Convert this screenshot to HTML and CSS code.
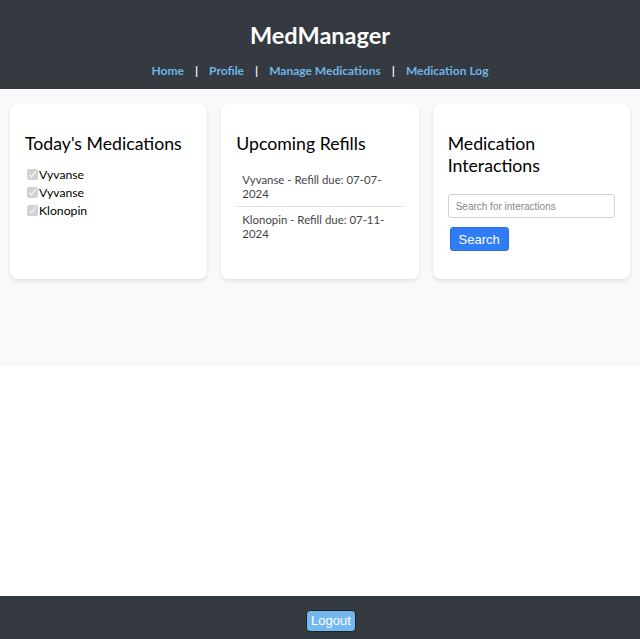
FILE: index.html
```html
<!DOCTYPE html>
<html lang="en">
<head>
<meta charset="utf-8">
<title>MedManager</title>
<link rel="stylesheet" href="styles.css">
</head>
<body>
<header class="site-header">
  <h1 class="brand">MedManager</h1>
  <nav class="nav">
    <a href="#" class="nav-link">Home</a>
    <span class="nav-sep">|</span>
    <a href="#" class="nav-link">Profile</a>
    <span class="nav-sep">|</span>
    <a href="#" class="nav-link">Manage Medications</a>
    <span class="nav-sep">|</span>
    <a href="#" class="nav-link">Medication Log</a>
  </nav>
</header>
<main class="dashboard">
  <section class="card">
    <h2 class="card-title">Today's Medications</h2>
    <ul class="check-list">
      <li class="check-item"><input type="checkbox" class="check" checked disabled><span>Vyvanse</span></li>
      <li class="check-item"><input type="checkbox" class="check" checked disabled><span>Vyvanse</span></li>
      <li class="check-item"><input type="checkbox" class="check" checked disabled><span>Klonopin</span></li>
    </ul>
  </section>
  <section class="card">
    <h2 class="card-title">Upcoming Refills</h2>
    <ul class="refill-list">
      <li class="refill-item">Vyvanse - Refill due: 07-07-2024</li>
      <li class="refill-item">Klonopin - Refill due: 07-11-2024</li>
    </ul>
  </section>
  <section class="card">
    <h2 class="card-title">Medication Interactions</h2>
    <form class="search-form">
      <input type="text" class="search-input" placeholder="Search for interactions">
      <button type="button" class="search-btn">Search</button>
    </form>
  </section>
</main>
<footer class="site-footer">
  <button type="button" class="logout-btn">Logout</button>
</footer>
</body>
</html>
```
FILE: styles.css
```css
* { box-sizing: border-box; }
html, body { margin: 0; padding: 0; }
body {
  font-family: Lato, "Open Sans", sans-serif;
  background: #ffffff;
  color: #000;
  min-height: 100vh;
  display: flex;
  flex-direction: column;
}
.site-header {
  background: #343a40;
  height: 89px;
  padding-top: 19px;
  text-align: center;
}
.brand {
  margin: 0;
  color: #ffffff;
  font-size: 23.5px;
  font-weight: 700;
  line-height: 32px;
}
.nav {
  margin-top: 12px;
  font-size: 12px;
  font-weight: 700;
  line-height: 16px;
  display: flex;
  justify-content: center;
}
.nav-link {
  color: #6fb5e6;
  text-decoration: none;
}
.nav-sep {
  color: #f2f2f2;
  font-weight: 700;
  margin: 0 11px 0 11px;
}
.dashboard {
  background: #f8f9fa;
  height: 277px;
  padding: 15px 10px;
  display: flex;
  align-items: flex-start;
  gap: 14px;
}
.card {
  flex: 1 1 0;
  min-width: 0;
  background: #ffffff;
  border-radius: 8px;
  box-shadow: 0 2px 4px rgba(0, 0, 0, 0.1);
  padding: 15px;
  height: 175px;
}
.card-title {
  font-size: 17.7px;
  font-weight: 400;
  line-height: 21.6px;
  margin: 14px 0 11px;
  color: #000;
}
.check-list {
  list-style: none;
  margin: 0;
  padding: 0;
}
.check-item {
  display: flex;
  align-items: center;
  height: 18px;
  font-size: 12.2px;
  color: #000;
}
.check {
  width: 11px;
  height: 11px;
  margin: 0 1px 0 2px;
}
.refill-list {
  list-style: none;
  margin: 0;
  padding: 0;
}
.refill-item {
  font-size: 11.4px;
  line-height: 14px;
  color: #444;
  padding: 6px 6px 7px;
}
.refill-item:first-child {
  padding: 7px 6px 5px;
}
.refill-item + .refill-item {
  border-top: 1px solid #e3e3e3;
}
.search-form {
  margin: 18px 0 0;
}
.search-input {
  display: block;
  width: 100%;
  height: 24px;
  border: 1px solid #ced4da;
  border-radius: 3px;
  padding: 0 7px;
  font-family: "Liberation Sans", Arial, sans-serif;
  font-size: 10px;
  color: #333;
}
.search-input::placeholder { color: #888; }
.search-btn {
  display: block;
  margin: 9px 0 0 2px;
  width: 59px;
  height: 24px;
  background: #2f7cf6;
  border: 1px solid #2a6fdc;
  border-radius: 3px;
  color: #ffffff;
  font-family: "Liberation Sans", Arial, sans-serif;
  font-size: 13px;
  padding: 0;
}
.site-footer {
  margin-top: auto;
  background: #343a40;
  height: 43px;
  padding-top: 13px;
  text-align: center;
}
.logout-btn {
  margin-left: 22px;
  width: 50px;
  height: 22px;
  background: #74b9ee;
  border: 1px solid #1e2226;
  border-radius: 4px;
  color: #ffffff;
  font-family: "Liberation Sans", Arial, sans-serif;
  font-size: 13px;
  padding: 0;
}
```
